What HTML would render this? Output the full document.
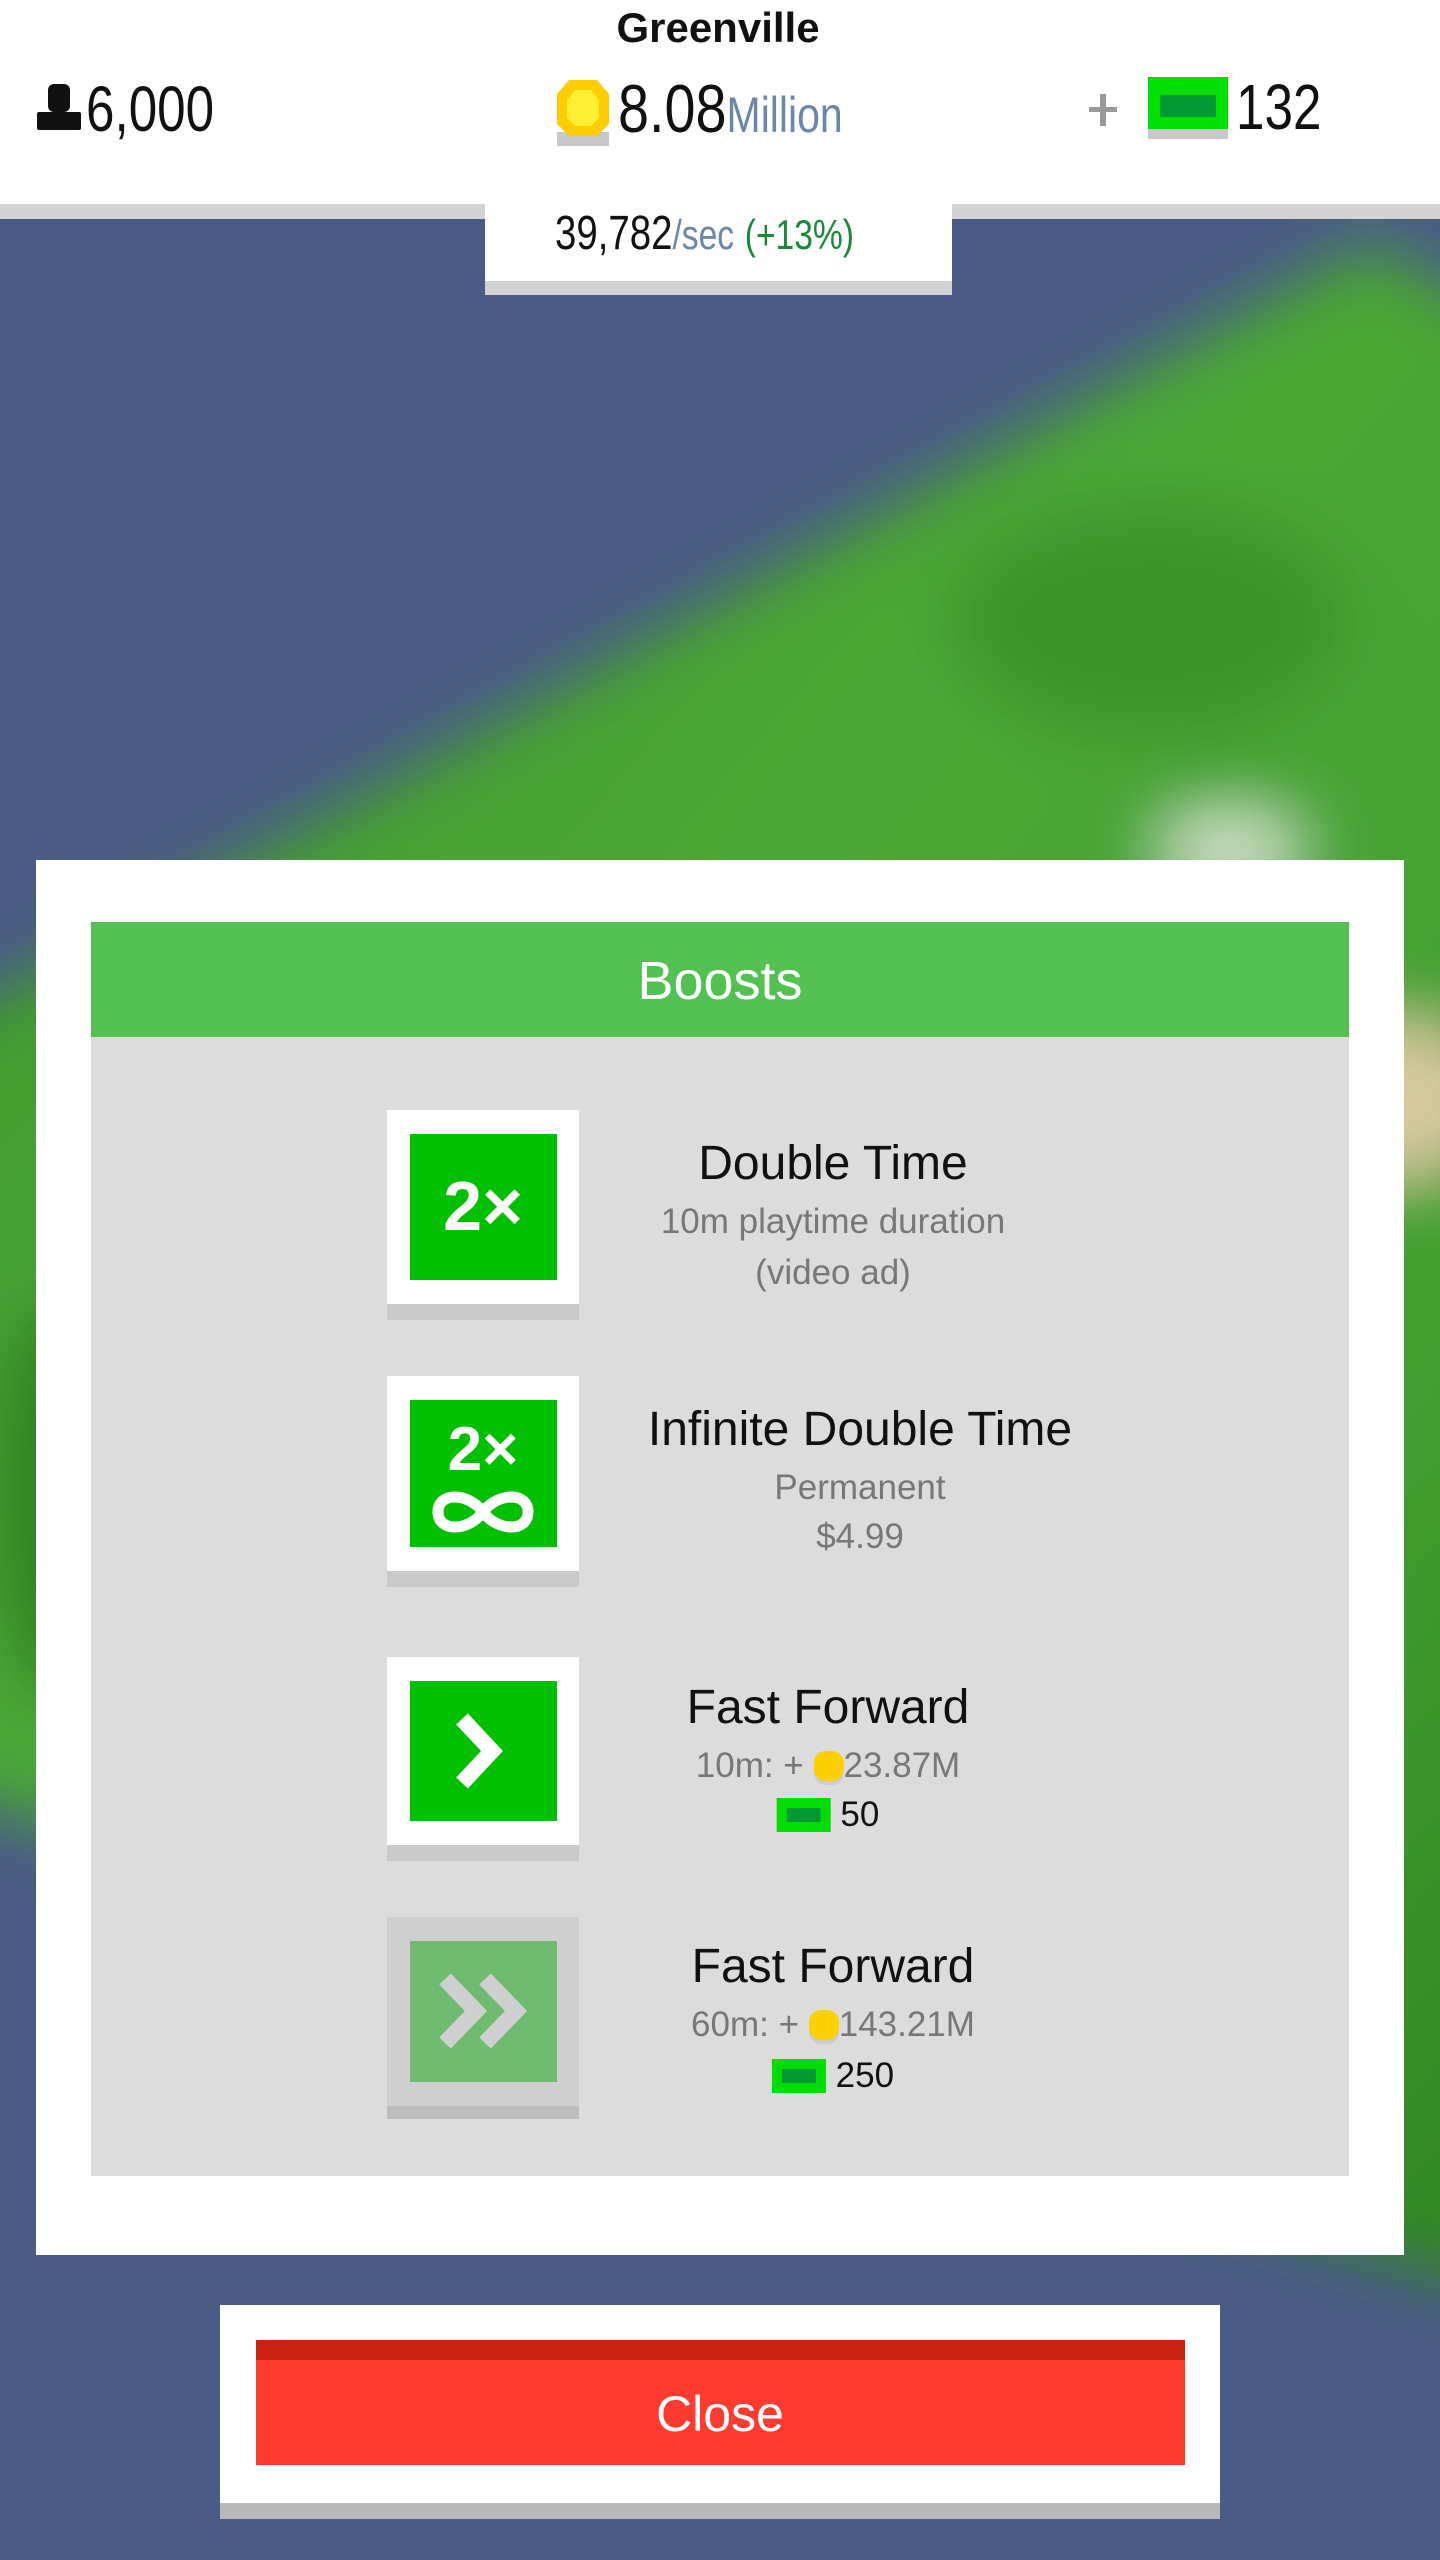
<!DOCTYPE html>
<html><head><meta charset="utf-8"><style>
*{margin:0;padding:0;box-sizing:border-box}
body{width:1440px;height:2560px;position:relative;overflow:hidden;background:#4a5b85;font-family:"Liberation Sans",sans-serif}
.abs{position:absolute}
.t{position:absolute;white-space:nowrap;text-align:center;transform:translateX(-50%)}
.title{font-size:48px;color:#111}
.sub{font-size:35px;color:#777}
.ibox{position:absolute;left:387px;width:192px;background:#fff;box-shadow:0 16px 0 #c9c9c9}
.inner{position:absolute;left:23px;right:22px;top:24px;bottom:24px;background:#00c000}
</style></head><body>
<svg class="abs" style="left:0;top:0" width="1440" height="2560">
<defs>
<filter id="b" x="-20%" y="-20%" width="140%" height="140%"><feGaussianBlur stdDeviation="32"/></filter>
<linearGradient id="g" x1="0" y1="0" x2="1" y2="1">
<stop offset="0" stop-color="#3a9128"/><stop offset="0.4" stop-color="#4aa834"/><stop offset="0.7" stop-color="#42a02e"/><stop offset="1" stop-color="#2c7f20"/></linearGradient>
</defs>
<g filter="url(#b)">
<polygon points="1371,245 1640,390 1640,2340 -120,1770 -120,1060" fill="url(#g)"/>
<ellipse cx="1150" cy="620" rx="200" ry="120" fill="#3e952b"/>
<ellipse cx="1380" cy="1100" rx="120" ry="80" fill="#d9c9a0"/>
<ellipse cx="1230" cy="850" rx="70" ry="35" fill="#d8e8d0"/>
<ellipse cx="60" cy="1500" rx="60" ry="200" fill="#2f7f20"/>
</g>
</svg>

<!-- header -->
<div class="abs" style="left:0;top:0;width:1440px;height:204px;background:#fff"></div>
<div class="abs" style="left:0;top:204px;width:1440px;height:15px;background:#d3d3d3"></div>
<div class="abs" style="left:485px;top:204px;width:467px;height:77px;background:#fff"></div>
<div class="abs" style="left:485px;top:281px;width:467px;height:14px;background:#d3d3d3"></div>
<div class="t" style="left:718px;top:4px;font-size:42px;font-weight:bold;color:#111">Greenville</div>

<svg class="abs" style="left:37px;top:84px" width="44" height="46"><rect x="11" y="0" width="22" height="28" rx="6" fill="#111"/><rect x="0" y="28" width="44" height="18" rx="2" fill="#111"/></svg>
<div class="abs" style="left:86px;top:72px;font-size:64px;color:#111;transform:scaleX(0.8);transform-origin:left">6,000</div>

<svg class="abs" style="left:557px;top:80px" width="52" height="66"><rect x="0" y="52" width="52" height="14" fill="#c8c8c8"/><polygon points="12,0 40,0 52,14 52,44 40,56 12,56 0,44 0,14" fill="#ffcc00"/><polygon points="18,10 34,10 42,20 42,38 34,46 18,46 10,38 10,20" fill="#ffee33"/></svg>
<div class="abs" style="left:618px;top:70px;font-size:68px;color:#111;transform:scaleX(0.82);transform-origin:left;white-space:nowrap">8.08<span style="font-size:50px;color:#6b87a8">Million</span></div>

<div class="abs" style="left:1089px;top:107px;width:28px;height:5px;background:#999"></div>
<div class="abs" style="left:1100px;top:94px;width:6px;height:32px;background:#999"></div>
<svg class="abs" style="left:1148px;top:77px" width="80" height="62"><rect x="0" y="50" width="80" height="12" fill="#c8c8c8"/><rect x="0" y="0" width="80" height="52" fill="#00e000"/><rect x="12" y="18" width="56" height="22" fill="#009933"/></svg>
<div class="abs" style="left:1236px;top:70px;font-size:64px;color:#111;transform:scaleX(0.8);transform-origin:left">132</div>

<div class="abs" style="left:555px;top:206px;font-size:48px;color:#111;transform:scaleX(0.8);transform-origin:left;white-space:nowrap">39,782<span style="color:#6b87a8;font-size:42px">/sec</span> <span style="color:#1a8a3a;font-size:42px">(+13%)</span></div>

<!-- modal -->
<div class="abs" style="left:36px;top:860px;width:1368px;height:1395px;background:#fff"></div>
<div class="abs" style="left:91px;top:922px;width:1258px;height:115px;background:#52c152"></div>
<div class="t" style="left:720px;top:950px;font-size:54px;color:#fff">Boosts</div>
<div class="abs" style="left:91px;top:1037px;width:1258px;height:1139px;background:#dcdcdc"></div>

<!-- item 1 -->
<div class="ibox" style="top:1110px;height:194px"><div class="inner">
<svg width="147" height="146" viewBox="0 0 147 146"><text x="73" y="96" text-anchor="middle" font-family="Liberation Sans" font-weight="bold" font-size="70" fill="#fff">2×</text></svg></div></div>
<div class="t title" style="left:833px;top:1136px">Double Time</div>
<div class="t sub" style="left:833px;top:1202px">10m playtime duration</div>
<div class="t sub" style="left:833px;top:1253px">(video ad)</div>

<!-- item 2 -->
<div class="ibox" style="top:1376px;height:195px"><div class="inner">
<svg width="147" height="147" viewBox="0 0 147 147"><text x="73" y="70" text-anchor="middle" font-family="Liberation Sans" font-weight="bold" font-size="62" fill="#fff">2×</text>
<path d="M73 112 C58 92 28 92 28 112 C28 132 58 132 73 112 C88 92 118 92 118 112 C118 132 88 132 73 112Z" fill="none" stroke="#fff" stroke-width="11"/></svg></div></div>
<div class="t title" style="left:860px;top:1402px">Infinite Double Time</div>
<div class="t sub" style="left:860px;top:1468px">Permanent</div>
<div class="t sub" style="left:860px;top:1517px">$4.99</div>

<!-- item 3 -->
<div class="ibox" style="top:1657px;height:188px"><div class="inner">
<svg width="146" height="140" viewBox="0 0 146 140"><path d="M52 38 L82 70 L52 102" fill="none" stroke="#fff" stroke-width="16" stroke-linejoin="miter"/></svg></div></div>
<div class="t title" style="left:828px;top:1680px">Fast Forward</div>
<div class="t sub" style="left:828px;top:1746px">10m: + <span style="display:inline-block;width:30px;height:30px;background:#ffd000;border-radius:40%;vertical-align:-4px;box-shadow:0 4px 0 #ccc"></span>23.87M</div>
<div class="t" style="left:828px;top:1795px;font-size:35px;color:#111"><span style="display:inline-block;width:54px;height:34px;background:#00dd00;vertical-align:-6px;position:relative"><span style="position:absolute;left:10px;top:10px;width:34px;height:14px;background:#009933"></span></span> 50</div>

<!-- item 4 -->
<div class="ibox" style="top:1917px;height:189px;background:#cfcfcf;box-shadow:0 13px 0 #bdbdbd"><div class="inner" style="background:#6fbb6f">
<svg width="147" height="141" viewBox="0 0 147 141"><path d="M35 38 L66 70 L35 102 M75 38 L106 70 L75 102" fill="none" stroke="#cfcfcf" stroke-width="16"/></svg></div></div>
<div class="t title" style="left:833px;top:1939px">Fast Forward</div>
<div class="t sub" style="left:833px;top:2005px">60m: + <span style="display:inline-block;width:30px;height:30px;background:#ffd000;border-radius:40%;vertical-align:-4px;box-shadow:0 4px 0 #ccc"></span>143.21M</div>
<div class="t" style="left:833px;top:2056px;font-size:35px;color:#111"><span style="display:inline-block;width:54px;height:34px;background:#00dd00;vertical-align:-6px;position:relative"><span style="position:absolute;left:10px;top:10px;width:34px;height:14px;background:#009933"></span></span> 250</div>

<!-- close -->
<div class="abs" style="left:220px;top:2305px;width:1000px;height:198px;background:#fff;box-shadow:0 16px 0 #b8b8b8"></div>
<div class="abs" style="left:256px;top:2340px;width:929px;height:125px;background:#ff3a2e;border-top:20px solid #cc2211"></div>
<div class="t" style="left:720px;top:2385px;font-size:50px;color:#fff">Close</div>
</body></html>
